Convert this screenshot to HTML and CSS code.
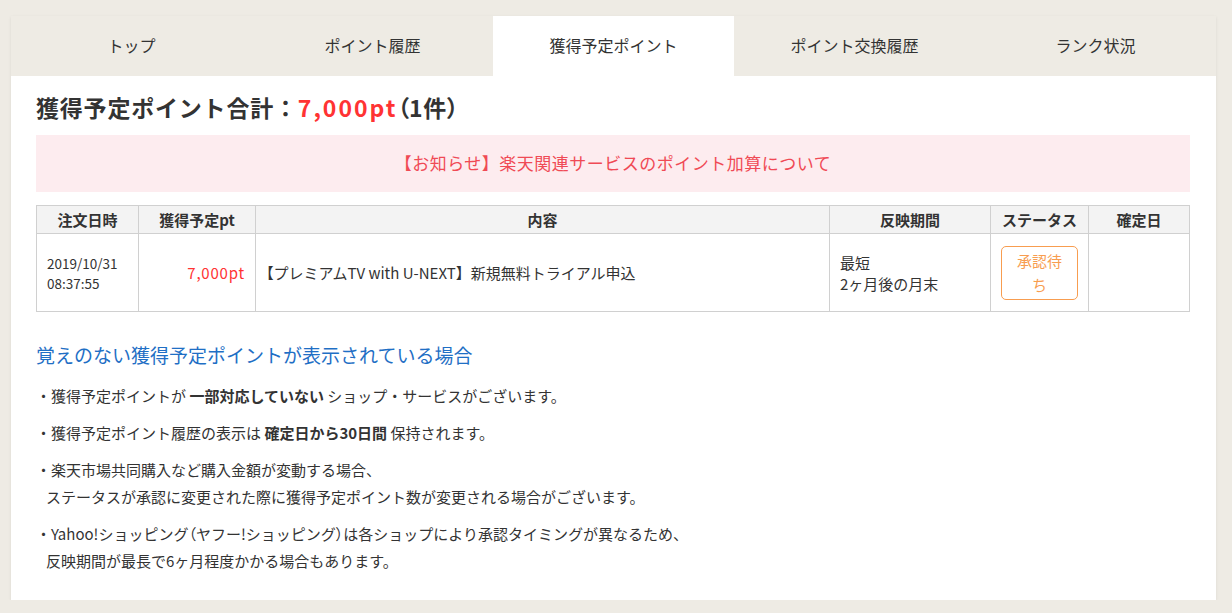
FILE: index.html
```html
<!DOCTYPE html>
<html lang="ja">
<head>
  <meta charset="UTF-8" />
  <title>獲得予定ポイント</title>
  <link rel="stylesheet" href="styles.css">
</head>
<body>
  <div class="card">
    <nav class="tabs">
      <a class="tab">トップ</a>
      <a class="tab">ポイント履歴</a>
      <a class="tab active">獲得予定ポイント</a>
      <a class="tab">ポイント交換履歴</a>
      <a class="tab">ランク状況</a>
    </nav>

    <main class="content">
      <h1 class="total">獲得予定ポイント合計：<span class="red">7,000pt</span><span class="pa">（</span>1件<span class="pa">）</span></h1>

      <div class="notice">【お知らせ】楽天関連サービスのポイント加算について</div>

      <table class="history">
        <thead>
          <tr>
            <th class="c-date">注文日時</th>
            <th class="c-pt">獲得予定pt</th>
            <th class="c-body">内容</th>
            <th class="c-term">反映期間</th>
            <th class="c-status">ステータス</th>
            <th class="c-fix">確定日</th>
          </tr>
        </thead>
        <tbody>
          <tr>
            <td class="date">2019/10/31<br>08:37:55</td>
            <td class="pt">7,000pt</td>
            <td><span class="pa">【</span>プレミアムTV with U-NEXT】新規無料トライアル申込</td>
            <td>最短<br>2ヶ月後の月末</td>
            <td class="status"><span class="badge">承認待ち</span></td>
            <td></td>
          </tr>
        </tbody>
      </table>

      <h2 class="faq-title">覚えのない獲得予定ポイントが表示されている場合</h2>
      <ul class="faq">
        <li>・獲得予定ポイントが <b>一部対応していない</b> ショップ・サービスがございます。</li>
        <li>・獲得予定ポイント履歴の表示は <b>確定日から30日間</b> 保持されます。</li>
        <li>・楽天市場共同購入など購入金額が変動する場合、<br>ステータスが承認に変更された際に獲得予定ポイント数が変更される場合がございます。</li>
        <li>・Yahoo!ショッピング<span class="pa">（</span>ヤフー!ショッピング<span class="pa">）</span>は各ショップにより承認タイミングが異なるため、<br>反映期間が最長で6ヶ月程度かかる場合もあります。</li>
      </ul>
    </main>
  </div>
</body>
</html>
```

FILE: styles.css
```css
body {
  margin: 0;
  background-color: #eeebe4;
  font-family: "Noto Sans CJK JP", "Noto Sans", sans-serif;
  color: #333;
}

.card {
  margin: 16px 16px 0 11px;
  width: 1205px;
  background-color: #fff;
  box-shadow: 0 1px 3px rgba(0, 0, 0, 0.08);
}

.tabs {
  display: flex;
  background-color: #eeebe4;
}

.tab {
  flex: 1;
  height: 60px;
  line-height: 58px;
  text-align: center;
  font-size: 16px;
  color: #333;
}

.tab.active {
  background-color: #fff;
}

.content {
  padding: 13px 26px 16px 25px;
}

.pa {
  font-feature-settings: "palt";
}

.total {
  margin: 0 0 10px;
  font-size: 23px;
  line-height: 36px;
  font-weight: bold;
  letter-spacing: 0.8px;
}

.red {
  color: #ff3333;
  letter-spacing: 2px;
}

.total .pa {
  letter-spacing: 0;
}

.notice {
  background-color: #fdecef;
  color: #f04a55;
  text-align: center;
  font-size: 17px;
  letter-spacing: 0.5px;
  height: 57px;
  line-height: 55px;
  margin-bottom: 13px;
}

.history {
  width: 100%;
  border-collapse: collapse;
  font-size: 15px;
}

.history th, .history td {
  border: 1px solid #d0d0d0;
}

.history th {
  background-color: #f3f3f3;
  height: 27px;
  padding: 0;
  font-weight: bold;
}

.history td {
  height: 77px;
  padding: 0 10px;
}

.c-date { width: 101px; }
.c-pt { width: 116px; }
.c-term { width: 160px; }
.c-status { width: 97px; }
.c-fix { width: 100px; }

.history td.date {
  font-size: 13.5px;
  line-height: 20px;
}

.history td.pt {
  text-align: right;
  color: #ff3333;
  letter-spacing: 0.8px;
}

.history td.status {
  text-align: center;
}

.badge {
  display: block;
  box-sizing: border-box;
  width: 77px;
  height: 54px;
  padding: 2px 10px;
  border: 1px solid #f89d50;
  border-radius: 5px;
  color: #f89d50;
  line-height: 24px;
}

.faq-title {
  margin: 29px 0 14px;
  font-size: 19px;
  font-weight: normal;
  color: #1f6fc5;
}

.faq {
  list-style: none;
  margin: 0;
  padding: 0;
  font-size: 15px;
  line-height: 27px;
}

.faq li {
  margin-bottom: 10px;
  padding-left: 10px;
  text-indent: -10px;
}

.faq b {
  font-weight: bold;
}
```
